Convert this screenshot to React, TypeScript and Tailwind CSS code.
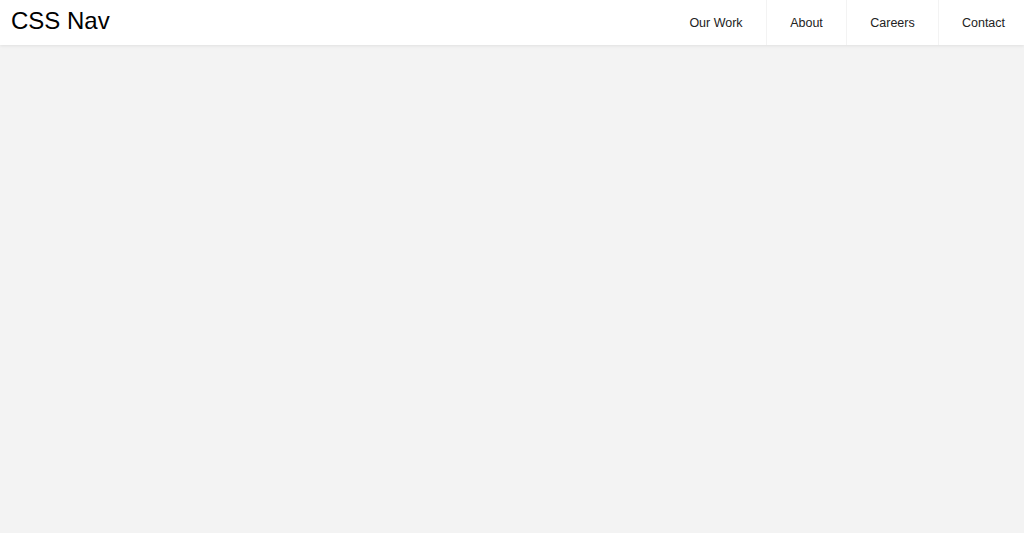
const links = [
  { label: "Our Work", w: "w-[100px]" },
  { label: "About", w: "w-[80px]" },
  { label: "Careers", w: "w-[92px]" },
  { label: "Contact", w: "w-[86px] pl-[4px]" },
];

export default function App() {
  return (
    <div className="min-h-screen bg-[#f3f3f3] font-['Liberation_Sans',Arial,sans-serif]">
      <header className="h-[45px] bg-white flex items-center justify-between shadow-[0_1px_3px_rgba(0,0,0,0.08)]">
        <div className="pl-[11px] text-[24px] leading-none text-black -mt-[4px]">CSS Nav</div>
        <nav className="flex h-full">
          {links.map((link, i) => (
            <a
              key={link.label}
              href="#"
              className={`${link.w} h-full flex items-center justify-center pt-[1px] text-[12.5px] text-[#222] ${
                i > 0 ? "border-l border-[#f3f3f3]" : ""
              }`}
            >
              {link.label}
            </a>
          ))}
        </nav>
      </header>
    </div>
  );
}
